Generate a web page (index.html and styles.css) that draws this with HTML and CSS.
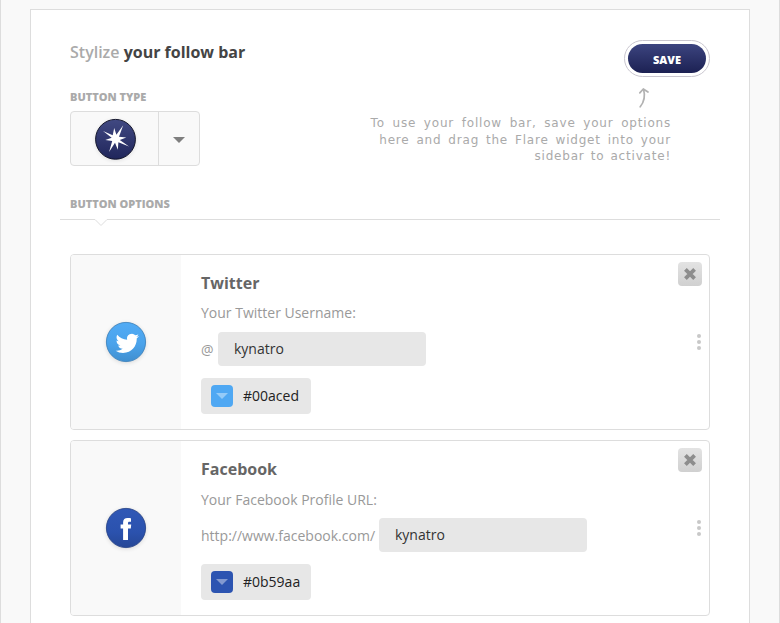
FILE: index.html
```html
<!DOCTYPE html>
<html lang="en">
<head>
<meta charset="utf-8">
<title>Follow bar</title>
<link rel="stylesheet" href="styles.css">
</head>
<body>
<main class="panel">
  <header class="top">
    <div class="intro">
      <h1><span>Stylize</span> your follow bar</h1>
      <h2>BUTTON TYPE</h2>
      <div class="type-select">
        <div class="type-icon">
          <svg width="50" height="50" viewBox="0 0 50 50">
            <defs>
              <linearGradient id="navy" x2="0" y2="1"><stop offset="0" stop-color="#414982"/><stop offset="1" stop-color="#20265b"/></linearGradient>
            </defs>
            <circle class="shadow" cx="25.500" cy="25.300" r="20"/>
            <circle cx="25.500" cy="25.300" r="19.9" fill="url(#navy)" stroke="#15172d"/>
            <path fill="#fff" d="M33.200 11.300L29 22.800L36.300 23.500L29.800 26L39 32.500L28.400 28.200L27.800 35.700L25 28.700L19.100 38L22.200 27L15.300 26.100L21.700 23.800L13 17.100L22.700 21.300L24.200 13.900L26.400 20.800Z"/>
          </svg>
        </div>
        <div class="type-arrow"><svg width="12" height="6" viewBox="0 0 12 6"><path fill="#7f7f7f" d="M0 0H12L6 6Z"/></svg></div>
      </div>
    </div>
    <div class="actions">
      <button class="save"><span>SAVE</span></button>
      <svg class="pointer" width="14" height="22" viewBox="0 0 14 22"><path fill="none" stroke="#b2b2b2" stroke-width="1.7" stroke-linecap="round" stroke-linejoin="round" d="M3.200 19.800C7 15 8.400 9 6.600 2.500M2.800 5.800L6.300 2L11 5"/></svg>
      <p class="note"><span class="n1">To use your follow bar, save your options</span><span class="n2">here and drag the Flare widget into your</span><span class="n3">sidebar to activate!</span></p>
    </div>
  </header>
  <h2 class="options-title">BUTTON OPTIONS</h2>
  <div class="rule"><svg class="notch" width="14" height="8" viewBox="0 0 14 8"><path fill="#fff" d="M0 0H14V1L7 7.500L0 1Z"/><path fill="none" stroke="#ddd" d="M0 .5H1L7 6.500L13 .5H14"/></svg></div>

  <section class="card">
    <div class="badge">
      <svg width="50" height="50" viewBox="0 0 50 50">
        <defs><linearGradient id="sky" x2="0" y2="1"><stop offset="0" stop-color="#51abf5"/><stop offset=".55" stop-color="#4ba3eb"/><stop offset="1" stop-color="#408fd0"/></linearGradient></defs>
        <circle class="shadow" cx="25" cy="25" r="20"/>
        <circle cx="25" cy="25" r="19.600" fill="url(#sky)" stroke="#367fbd" stroke-width=".8"/>
        <path fill="#fff" transform="translate(14.600 14.600) scale(.98)" d="M23.950 4.570a10 10 0 0 1-2.820.77 4.960 4.960 0 0 0 2.160-2.720c-.95.55-2 .95-3.130 1.180a4.920 4.920 0 0 0-8.380 4.480C7.690 8.090 4.070 6.130 1.640 3.160a4.820 4.820 0 0 0-.67 2.480c0 1.710.87 3.210 2.190 4.100a4.900 4.900 0 0 1-2.230-.62v.06a4.920 4.920 0 0 0 3.950 4.830 5 5 0 0 1-2.210.09 4.940 4.940 0 0 0 4.600 3.420A9.870 9.870 0 0 1 0 19.540a14 14 0 0 0 7.550 2.210c9.050 0 14-7.500 14-13.980 0-.21 0-.42-.02-.63a9.940 9.940 0 0 0 2.420-2.570Z"/>
      </svg>
    </div>
    <div class="fields">
      <h3>Twitter</h3>
      <label>Your Twitter Username:</label>
      <div class="entry"><span class="at">@</span><div class="input">kynatro</div></div>
      <div class="color"><i class="swatch sky"><svg width="12" height="6" viewBox="0 0 12 6"><path d="M0 0H12L6 6Z"/></svg></i>#00aced</div>
    </div>
    <div class="tools">
      <button class="close"><svg width="12" height="12" viewBox="0 0 12 12"><path d="M1.400 1.400L10.600 10.600M10.600 1.400L1.400 10.600"/></svg></button>
      <div class="grip"><i></i><i></i><i></i></div>
    </div>
  </section>

  <section class="card">
    <div class="badge">
      <svg width="50" height="50" viewBox="0 0 50 50">
        <defs><linearGradient id="blue" x2="0" y2="1"><stop offset="0" stop-color="#3058b6"/><stop offset=".6" stop-color="#2b52ae"/><stop offset="1" stop-color="#264796"/></linearGradient></defs>
        <circle class="shadow" cx="25" cy="25" r="20"/>
        <circle cx="25" cy="25" r="19.600" fill="url(#blue)" stroke="#223f87" stroke-width=".8"/>
        <path fill="#fff" d="M22.100 37V25.600H19.600V21.500H22.100V19.300C22.100 16.200 23.800 14.900 26.500 14.900C28 14.900 29.300 15 30 15.200V18.700H28.400C27.300 18.700 27 19.200 27 20.200V21.500H30.200L29.800 25.600H27V37Z"/>
      </svg>
    </div>
    <div class="fields">
      <h3>Facebook</h3>
      <label class="lower">Your Facebook Profile URL:</label>
      <div class="entry"><span class="url">http://www.facebook.com/</span><div class="input">kynatro</div></div>
      <div class="color"><i class="swatch blue"><svg width="12" height="6" viewBox="0 0 12 6"><path d="M0 0H12L6 6Z"/></svg></i>#0b59aa</div>
    </div>
    <div class="tools">
      <button class="close"><svg width="12" height="12" viewBox="0 0 12 12"><path d="M1.400 1.400L10.600 10.600M10.600 1.400L1.400 10.600"/></svg></button>
      <div class="grip"><i></i><i></i><i></i></div>
    </div>
  </section>
</main>
</body>
</html>
```
FILE: styles.css
```css
* { box-sizing: border-box; }
html { background: #f9f9f9; overflow: hidden; }
body {
  margin: 0;
  height: 623px;
  overflow: hidden;
  padding: 9px 29px 0;
  border: solid #ddd;
  border-width: 0 1px;
  font: 14px/20px "Open Sans", sans-serif;
  color: #333;
}
.panel {
  width: 720px;
  height: 640px;
  padding: 30px 39px 0;
  background: #fff;
  border: 1px solid #ddd;
}
h1, h2, h3, p { margin: 0; }
svg { display: block; flex: none; }
.shadow { fill: #000; opacity: .12; filter: drop-shadow(0 1px 2px #000); }

.top { display: flex; justify-content: space-between; height: 126px; }
h1 { font-size: 16px; line-height: 24px; font-weight: 700; color: #444; white-space: nowrap; }
h1 span { font-weight: 600; color: #aaa; }
h2 { font-size: 11px; line-height: 14px; font-weight: 800; color: #aaa; }
.intro h2 { margin: 26px 0 7px; }
.type-select {
  display: flex;
  width: 130px;
  height: 55px;
  background: #f9f9f9;
  border: 1px solid #ddd;
  border-radius: 4px;
}
.type-icon { width: 88px; border-right: 1px solid #ddd; display: flex; align-items: center; justify-content: center; padding: 1px 0 0 2px; }
.type-icon svg { margin-left: -1px; }
.type-arrow { flex: 1; display: flex; align-items: center; justify-content: center; padding-top: 2px; }

.actions { display: flex; flex-direction: column; align-items: flex-end; }
.save {
  width: 86px;
  height: 37px;
  padding: 3px;
  border: 1px solid #c9c6cf;
  border-radius: 19px;
  background: #fff;
  font: 800 11px/32px "Open Sans", sans-serif;
  color: #fff;
}
.save span { display: block; height: 29px; border-radius: 15px; background: linear-gradient(#3c447f, #1c2153); }
.pointer { margin: 10px 59px 0 0; }
.note {
  display: flex;
  flex-direction: column;
  align-items: flex-end;
  margin: 6px 39px 0 0;
  font: 400 12px/16.5px "DejaVu Sans", sans-serif;
  letter-spacing: .8px;
  color: #aaa;
  white-space: nowrap;
}
.n1 { word-spacing: 3.1px; }
.n2 { word-spacing: 2.3px; }
.n3 { word-spacing: 1.5px; }

.options-title { margin-top: 31px; }
.rule { height: 1px; margin: 8px -10px 34px; background: #ddd; position: relative; }
.notch { position: absolute; left: 34px; top: 0; }

.card {
  display: flex;
  height: 176px;
  margin-bottom: 10px;
  border: 1px solid #ddd;
  border-radius: 4px;
  overflow: hidden;
}
.badge { width: 110px; background: #f9f9f9; display: flex; align-items: center; justify-content: center; }
.fields { flex: 1; padding: 18px 0 0 20px; }
h3 { font-size: 16px; line-height: 20px; font-weight: 700; color: #666; }
label { display: block; margin: 10px 0 9px; color: #999; }
label.lower { margin: 11px 0 8px; }
.entry { display: flex; height: 34px; line-height: 36px; color: #999; }
.at { width: 17px; }
.url { width: 178px; white-space: nowrap; }
.input { width: 208px; height: 34px; padding-left: 16px; line-height: 34px; background: #e7e7e7; border-radius: 4px; color: #333; }
.color {
  display: flex;
  align-items: center;
  gap: 10px;
  width: 110px;
  height: 36px;
  margin-top: 12px;
  padding-left: 10px;
  background: #e7e7e7;
  border-radius: 4px;
  color: #222;
}
.swatch { display: flex; align-items: center; justify-content: center; width: 22px; height: 22px; border-radius: 4px; }
.sky { background: #4fa8f3; fill: #95cbf8; }
.blue { background: #2c54b1; fill: #8299d0; }
.tools { width: 31px; padding-top: 7px; }
.close {
  display: flex;
  align-items: center;
  justify-content: center;
  width: 24px;
  height: 24px;
  padding: 0;
  border: 0;
  border-radius: 4px;
  background: linear-gradient(#e3e3e3, #d0d0d0);
}
.close path { stroke: #8d8d8d; stroke-width: 3.8; stroke-linecap: butt; }
.grip { display: flex; flex-direction: column; gap: 2px; margin: 48px 0 0 19px; }
.grip i { width: 4px; height: 4px; border-radius: 50%; background: #c8c8c8; }
```
